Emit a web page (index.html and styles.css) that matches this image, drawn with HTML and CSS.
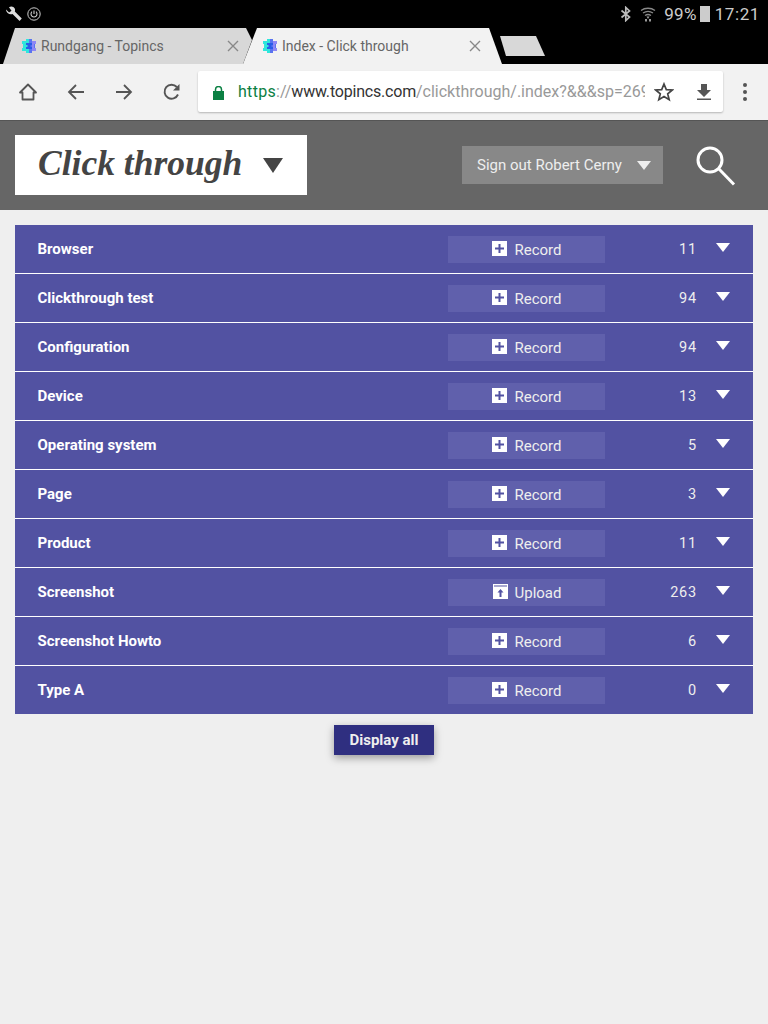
FILE: index.html
```html
<!DOCTYPE html>
<html lang="en">
<head>
    <meta charset="UTF-8">
    <meta name="viewport" content="width=device-width, initial-scale=1.0">
    <title>Index - Click through</title>
    <link rel="stylesheet" href="styles.css">
</head>
<body>
    <svg class="defs" width="0" height="0">
        <symbol id="plus" viewBox="0 0 15 15">
            <path fill="#fff" d="M0 0h15v15H0z"/>
            <path fill="#5252a2" d="M6.500 3h2v3.500H12v2H8.500V12h-2V8.500H3v-2h3.500z"/>
        </symbol>
        <symbol id="upload" viewBox="0 0 15 15">
            <path fill="#fff" d="M0 0h15v15H0z"/>
            <path fill="#5252a2" d="M1 1.500h13v1H1zM7.500 5l3 3.500H8.500V13h-2V8.500H4.500z"/>
        </symbol>
        <symbol id="favicon" viewBox="0 0 16 16">
            <path fill="#2fe6dc" d="M1 3h4V1h3v14H5v-2H1v-3h1V6H1z"/>
            <path fill="#5a74f0" d="M8 1h3v2h4v3h-1v4h1v3h-4v2H8z"/>
            <path fill="#8f88f5" d="M11 3h4v3h-2v4h2v3h-4z"/>
            <path fill="#2a5ce8" d="M5 5h6v2H9.500v2H11v2H5V9h1.500V7H5z"/>
        </symbol>
    </svg>

    <!-- Android status bar -->
    <div class="status-bar">
        <div class="status-left">
            <svg width="16" height="16" viewBox="1 1.500 14.500 14"><path fill="#ddd" d="M1 4.500 3.800 7.200 6 5.600 3.700 2.400C5.500 1 8 1.600 8.900 3.500 9.300 4.400 9.300 5.400 9 6.200L15.300 12.600 13.300 14.800 6.900 8.400C5.500 8.900 3.700 8.600 2.500 7.500 1.500 6.600.9 5.600 1 4.500Z"/></svg>
            <svg width="14" height="14" viewBox="0 0 14 14"><circle cx="7" cy="7" r="6.200" fill="none" stroke="#ccc" stroke-width="1"/><path fill="none" stroke="#ccc" stroke-width="1.100" d="M5 4.700a3 3 0 1 0 4 0M7 3.500v3.500"/></svg>
        </div>
        <div class="status-right">
            <svg width="12" height="16" viewBox="0 0 12 16"><path fill="none" stroke="#bbb" stroke-width="1.700" d="M1.500 4.500 9.500 11 5.800 14.500V1.500L9.500 5 1.500 11.500"/></svg>
            <svg class="status-wifi" width="16" height="16" viewBox="0 0 16 16"><path fill="none" stroke="#888" stroke-width="1.300" d="M1 4.500C5 1.500 11 1.500 15 4.500M3 7C6 5 10 5 13 7M5 9.500C6.800 8.300 9.200 8.300 11 9.500"/><path fill="#999" d="M6.500 10.500h3l-1.500 2.500zM5 13h2v2.500H5zM9 13h2v2.500H9z"/></svg>
            <span class="status-pct">99%</span>
            <span class="battery"></span>
            <span class="status-time">17:21</span>
        </div>
    </div>

    <!-- tabs -->
    <div class="tab-strip">
        <div class="tab tab-back">
            <svg class="tab-icon" width="16" height="16"><use href="#favicon"/></svg>
            <span class="tab-title">Rundgang - Topincs</span>
            <svg class="tab-close" width="12" height="12" viewBox="0 0 12 12"><path stroke="#888" stroke-width="1.400" d="M1 1l10 10M11 1 1 11"/></svg>
        </div>
        <div class="tab tab-active">
            <svg class="tab-icon" width="16" height="16"><use href="#favicon"/></svg>
            <span class="tab-title">Index - Click through</span>
            <svg class="tab-close" width="12" height="12" viewBox="0 0 12 12"><path stroke="#888" stroke-width="1.400" d="M1 1l10 10M11 1 1 11"/></svg>
        </div>
        <div class="tab-new"></div>
    </div>

    <!-- toolbar -->
    <div class="toolbar">
        <div class="nav-buttons">
            <svg width="20" height="20" viewBox="0 0 20 20"><path fill="none" stroke="#555" stroke-width="1.800" stroke-linejoin="round" d="M2 10.500 10 2.500l8 8h-2.500v7h-11v-7z"/></svg>
            <svg width="20" height="20" viewBox="0 0 20 20"><path fill="none" stroke="#555" stroke-width="1.800" d="M18 10H3M10 3l-7 7 7 7"/></svg>
            <svg width="20" height="20" viewBox="0 0 20 20"><path fill="none" stroke="#555" stroke-width="1.800" d="M2 10h15M10 3l7 7-7 7"/></svg>
            <svg width="20" height="20" viewBox="0 0 20 20"><path fill="none" stroke="#555" stroke-width="1.900" d="M16 12.500A7 7 0 1 1 14.800 5"/><path fill="#555" d="M17.500 2v6.500H11z"/></svg>
        </div>
        <div class="url-box">
            <svg class="lock" width="11" height="14" viewBox="0 0 11 14"><path fill="#0b8043" d="M0 5h11v9H0z"/><path fill="none" stroke="#0b8043" stroke-width="1.500" d="M2.500 5.500V3.500a3 3 0 0 1 6 0v2"/></svg>
            <div class="url-text"><span class="url-green">https</span><span class="url-grey">://</span><span class="url-dark">www.topincs.com</span><span class="url-grey">/clickthrough/.index?&amp;&amp;&amp;sp=269</span></div>
            <svg class="url-star" width="20" height="20" viewBox="0 0 20 20"><path fill="none" stroke="#444" stroke-width="1.700" stroke-linejoin="miter" d="M10 2l2.300 5.600 6 .4-4.600 3.900 1.500 5.900L10 14.600l-5.200 3.200 1.500-5.900L1.700 8l6-.4z"/></svg>
            <svg class="url-dl" width="16" height="18" viewBox="0 0 16 18"><path fill="#555" d="M5 1h6v6h4l-7 7-7-7h4zM1 15.500h14V17H1z"/></svg>
        </div>
        <div class="menu-dots"><span></span><span></span><span></span></div>
    </div>

    <!-- page -->
    <header class="site-header">
        <div class="logo-box">
            <span class="logo-title">Click through</span>
            <span class="caret caret-logo"></span>
        </div>
        <div class="user-menu">
            <span>Sign out Robert Cerny</span>
            <span class="caret caret-user"></span>
        </div>
        <svg class="search-icon" width="42" height="44" viewBox="0 0 42 44"><circle cx="16" cy="16" r="12" fill="none" stroke="#fff" stroke-width="3"/><path stroke="#fff" stroke-width="3" d="M24.500 24.500 40 40.500"/></svg>
    </header>

    <main class="content">
        <div class="type-list">
            <div class="type-row">
                <span class="type-name">Browser</span>
                <button class="type-action"><svg width="15" height="15"><use href="#plus"/></svg>Record</button>
                <span class="type-count">11</span>
                <span class="caret caret-row"></span>
            </div>
            <div class="type-row">
                <span class="type-name">Clickthrough test</span>
                <button class="type-action"><svg width="15" height="15"><use href="#plus"/></svg>Record</button>
                <span class="type-count">94</span>
                <span class="caret caret-row"></span>
            </div>
            <div class="type-row">
                <span class="type-name">Configuration</span>
                <button class="type-action"><svg width="15" height="15"><use href="#plus"/></svg>Record</button>
                <span class="type-count">94</span>
                <span class="caret caret-row"></span>
            </div>
            <div class="type-row">
                <span class="type-name">Device</span>
                <button class="type-action"><svg width="15" height="15"><use href="#plus"/></svg>Record</button>
                <span class="type-count">13</span>
                <span class="caret caret-row"></span>
            </div>
            <div class="type-row">
                <span class="type-name">Operating system</span>
                <button class="type-action"><svg width="15" height="15"><use href="#plus"/></svg>Record</button>
                <span class="type-count">5</span>
                <span class="caret caret-row"></span>
            </div>
            <div class="type-row">
                <span class="type-name">Page</span>
                <button class="type-action"><svg width="15" height="15"><use href="#plus"/></svg>Record</button>
                <span class="type-count">3</span>
                <span class="caret caret-row"></span>
            </div>
            <div class="type-row">
                <span class="type-name">Product</span>
                <button class="type-action"><svg width="15" height="15"><use href="#plus"/></svg>Record</button>
                <span class="type-count">11</span>
                <span class="caret caret-row"></span>
            </div>
            <div class="type-row">
                <span class="type-name">Screenshot</span>
                <button class="type-action"><svg width="15" height="15"><use href="#upload"/></svg>Upload</button>
                <span class="type-count">263</span>
                <span class="caret caret-row"></span>
            </div>
            <div class="type-row">
                <span class="type-name">Screenshot Howto</span>
                <button class="type-action"><svg width="15" height="15"><use href="#plus"/></svg>Record</button>
                <span class="type-count">6</span>
                <span class="caret caret-row"></span>
            </div>
            <div class="type-row">
                <span class="type-name">Type A</span>
                <button class="type-action"><svg width="15" height="15"><use href="#plus"/></svg>Record</button>
                <span class="type-count">0</span>
                <span class="caret caret-row"></span>
            </div>
        </div>
        <button class="display-all">Display all</button>
    </main>
</body>
</html>
```

FILE: styles.css
```css
html, body {
    margin: 0;
    padding: 0;
}
body {
    width: 768px;
    height: 1024px;
    overflow: hidden;
    background-color: #efefef;
    font-family: Roboto, sans-serif;
}
.defs {
    display: block;
    height: 0;
}

/* status bar */
.status-bar {
    height: 28px;
    background: #000;
    display: flex;
    align-items: center;
    justify-content: space-between;
    padding: 0 8px 0 6px;
}
.status-left {
    display: flex;
    align-items: center;
    gap: 5px;
}
.status-right {
    display: flex;
    align-items: center;
    color: #ccc;
    font-size: 17px;
}
.status-wifi {
    margin-left: 8px;
}
.status-pct {
    margin-left: 8px;
    letter-spacing: 0.3px;
}
.battery {
    width: 10px;
    height: 16px;
    margin-left: 3px;
    background: #ccc;
}
.status-time {
    margin-left: 5px;
    letter-spacing: 0.6px;
}

/* tabs */
.tab-strip {
    height: 36px;
    background: #000;
    display: flex;
    padding-left: 3px;
}
.tab {
    height: 36px;
    display: flex;
    align-items: center;
    box-sizing: border-box;
    font-size: 14px;
    color: #666;
}
.tab-back {
    width: 253px;
    padding: 0 17px 0 18px;
    background: #d8d8d8;
    clip-path: polygon(0 100%, 12px 0, 243px 0, 249px 12px, 240px 100%);
}
.tab-active {
    width: 259px;
    margin-left: -13px;
    padding: 0 21px 0 19px;
    background: #f2f2f2;
    clip-path: polygon(0 100%, 14px 0, 246px 0, 259px 100%);
}
.tab-icon {
    flex-shrink: 0;
}
.tab-title {
    flex: 1;
    margin-left: 4px;
}
.tab-new {
    width: 45px;
    height: 20px;
    margin: 8px 0 0 -2px;
    background: #d8d8d8;
    clip-path: polygon(0 0, 36px 0, 100% 100%, 6px 100%);
}

/* toolbar */
.toolbar {
    height: 56px;
    background: #f2f2f2;
    display: flex;
    align-items: center;
    box-sizing: border-box;
    padding: 0 0 0 18px;
}
.nav-buttons {
    display: flex;
    gap: 28px;
    width: 180px;
}
.url-box {
    width: 525px;
    height: 41px;
    margin-top: -1px;
    background: #fff;
    border-radius: 2px;
    box-shadow: 0 1px 2px rgba(0, 0, 0, 0.25);
    display: flex;
    align-items: center;
    box-sizing: border-box;
    padding-left: 15px;
}
.lock {
    flex-shrink: 0;
    margin-top: 2px;
}
.url-text {
    width: 407px;
    margin-left: 14px;
    overflow: hidden;
    white-space: nowrap;
    font-size: 16px;
}
.url-green {
    color: #0b8043;
    letter-spacing: 0.3px;
}
.url-grey {
    color: #999;
}
.url-dark {
    color: #333;
    letter-spacing: -0.2px;
}
.url-star {
    margin-left: 9px;
    flex-shrink: 0;
}
.url-dl {
    margin-left: 22px;
    flex-shrink: 0;
}
.menu-dots {
    display: flex;
    flex-direction: column;
    gap: 3px;
    margin-left: 20px;
}
.menu-dots span {
    width: 4px;
    height: 4px;
    border-radius: 50%;
    background: #555;
}

/* site header */
.site-header {
    height: 90px;
    background: #666666;
    border-top: 1px solid #555;
    box-sizing: border-box;
    display: flex;
    align-items: center;
    padding-left: 15px;
}
.logo-box {
    width: 292px;
    height: 60px;
    background: #fff;
    display: flex;
    align-items: center;
    box-sizing: border-box;
    padding-left: 23px;
    margin-top: -1px;
}
.logo-title {
    font-family: "Liberation Serif", serif;
    font-style: italic;
    font-weight: bold;
    font-size: 35.500px;
    color: #444;
    margin-top: -5px;
}
.caret {
    display: inline-block;
    width: 0;
    height: 0;
    border-style: solid;
    border-color: transparent;
    border-bottom-width: 0;
}
.caret-logo {
    margin-left: auto;
    margin-right: 24px;
    border-width: 15px 10px 0;
    border-top-color: #444;
}
.user-menu {
    width: 201px;
    height: 38px;
    margin-left: 155px;
    margin-top: -1px;
    background: #888888;
    color: #eee;
    font-size: 15px;
    display: flex;
    align-items: center;
    box-sizing: border-box;
    padding-left: 15px;
}
.caret-user {
    margin-left: auto;
    margin-right: 12px;
    border-width: 9px 7px 0;
    border-top-color: #eee;
}
.search-icon {
    margin-left: 31px;
    margin-top: 1px;
}

/* list of types */
.content {
    padding: 15px 15px 0;
    display: flex;
    flex-direction: column;
    align-items: center;
}
.type-list {
    width: 738px;
}
.type-row {
    height: 49px;
    box-sizing: border-box;
    background: #5252a2;
    border-bottom: 1px solid #fff;
    display: grid;
    grid-template-columns: 1fr 157px 92px 56px;
    align-items: center;
}
.type-row:last-child {
    height: 48px;
    border-bottom: 0;
}
.type-name {
    padding-left: 22.500px;
    color: #fff;
    font-weight: bold;
    font-size: 15px;
}
.type-action {
    height: 27px;
    margin-top: 1px;
    border: none;
    padding: 0 0 0 1px;
    background: #6060ac;
    color: #eee;
    font-family: Roboto, sans-serif;
    font-size: 15px;
    display: flex;
    align-items: center;
    justify-content: center;
    gap: 7px;
}
.type-action svg {
    margin-top: -3px;
}
.type-count {
    margin-top: 1px;
    color: #eee;
    font-size: 14.500px;
    letter-spacing: 0.8px;
    text-align: right;
}
.caret-row {
    margin-left: 19px;
    margin-top: -3px;
    border-width: 9px 7px 0;
    border-top-color: #fff;
}
.display-all {
    width: 100px;
    height: 30px;
    margin-top: 11px;
    border: none;
    background: #2f2f80;
    color: #eee;
    font-family: Roboto, sans-serif;
    font-weight: bold;
    font-size: 15px;
    box-shadow: 0 3px 8px rgba(0, 0, 0, 0.35);
}
```
